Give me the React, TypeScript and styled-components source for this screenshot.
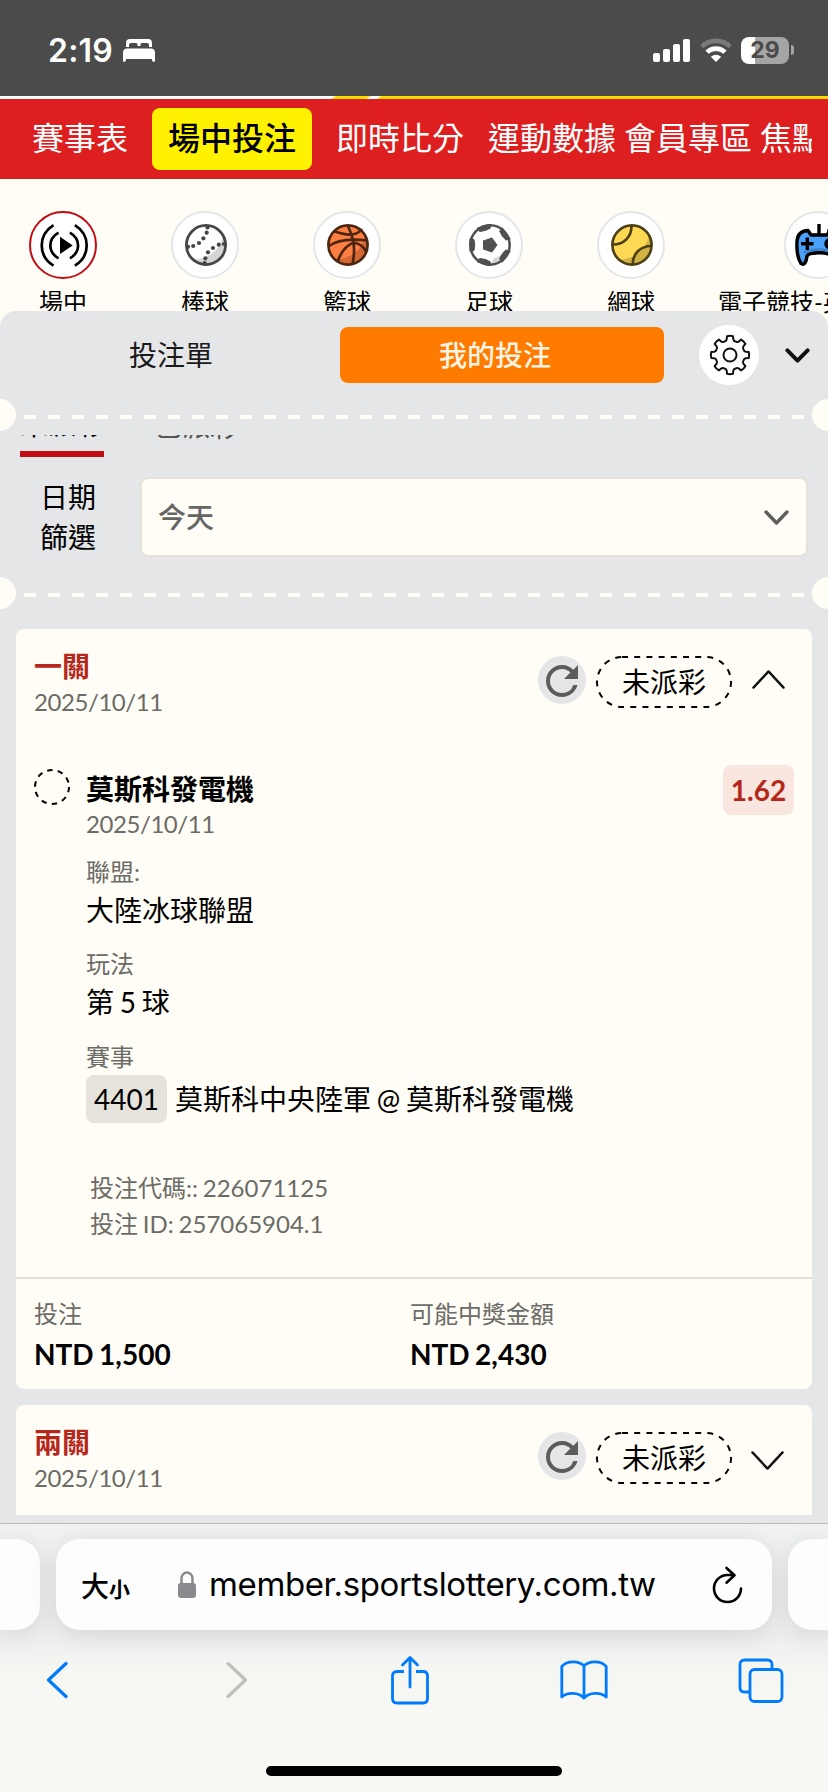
import React from 'react';
import styled, { createGlobalStyle } from 'styled-components';
import { MdRefresh } from 'react-icons/md';

const cream = '#fffdf5';
const grey = '#e4e6e8';
const sans = "Lato, 'Noto Sans CJK TC', sans-serif";

const GlobalStyle = createGlobalStyle`
  * { box-sizing: border-box; }
  body { margin: 0; background: ${cream}; overflow: hidden; }
  svg { display: block; flex: none; }
`;

const Screen = styled.div`
  display: flex;
  flex-direction: column;
  width: 828px;
  height: 1792px;
  overflow: hidden;
  background: ${cream};
  font-family: ${sans};
  color: #000;
`;

const StatusBar = styled.header`
  flex: none;
  display: flex;
  align-items: center;
  height: 96px;
  padding: 4px 34px 0 48px;
  background: #4b4b4b;
  font-family: Inter, sans-serif;
`;

const Clock = styled.span`
  width: 75px;
  font-size: 32px;
  font-weight: 600;
  letter-spacing: 0.2px;
  color: #fff;
`;

const StatusIcons = styled.div`
  display: flex;
  align-items: center;
  gap: 10px;
  margin-left: auto;
`;

const Battery = styled.div`
  display: flex;
  align-items: center;
  gap: 2px;
  margin-left: -1px;
`;

const BatteryBody = styled.div`
  display: flex;
  align-items: center;
  justify-content: center;
  width: 48px;
  height: 27px;
  border-radius: 8px;
  background: linear-gradient(90deg, #fff 14px, #a5a5a5 14px);
  color: #4b4b4b;
  font-size: 23px;
  font-weight: 700;
`;

const BatteryNub = styled.div`
  width: 3px;
  height: 10px;
  border-radius: 0 4px 4px 0;
  background: #a5a5a5;
`;

const Nav = styled.nav`
  flex: none;
  display: flex;
  align-items: center;
  height: 80px;
  padding: 0 16px 0 32px;
  background: #dd1f20;
`;

const NavTrack = styled.div`
  display: flex;
  align-items: center;
  width: 780px;
  overflow: hidden;
`;

const NavItem = styled.a<{ $active?: boolean; $gap: number }>`
  flex: none;
  height: 62px;
  margin-right: ${(p) => p.$gap}px;
  padding: 0 ${(p) => (p.$active ? 16 : 0)}px;
  border-radius: 8px;
  background: ${(p) => (p.$active ? '#fff200' : 'transparent')};
  color: ${(p) => (p.$active ? '#000' : '#fff')};
  font-size: 32px;
  font-weight: ${(p) => (p.$active ? 500 : 400)};
  line-height: 60px;
  white-space: nowrap;
`;

const Sports = styled.div`
  flex: none;
  display: flex;
  gap: 32px;
  height: 148px;
  padding: 32px 0 0 8px;
  overflow: hidden;
`;

const Sport = styled.div`
  flex: none;
  display: flex;
  flex-direction: column;
  align-items: center;
  min-width: 110px;
`;

const SportCircle = styled.div<{ $active?: boolean }>`
  display: flex;
  align-items: center;
  justify-content: center;
  width: 68px;
  height: 68px;
  padding-left: 2px;
  border: 2px solid ${(p) => (p.$active ? '#c10d12' : '#e4e6e8')};
  border-radius: 50%;
  background: #fff;
`;

const SportName = styled.span`
  margin-top: 7px;
  font-size: 24px;
  line-height: 32px;
  white-space: nowrap;
`;

const Panel = styled.main`
  position: relative;
  flex: none;
  display: flex;
  flex-direction: column;
  height: 1212px;
  margin-top: -16px;
  border-radius: 16px 16px 0 0;
  background: ${grey};
  word-spacing: -0.085em;
`;

const PanelHead = styled.div`
  display: flex;
  align-items: center;
  height: 88px;
  padding: 0 18px 0 16px;
`;

const Tab = styled.button<{ $active?: boolean }>`
  width: 324px;
  height: 56px;
  padding: 0 14px 0 0;
  border: 0;
  border-radius: 8px;
  background: ${(p) => (p.$active ? '#ff7b00' : 'transparent')};
  color: ${(p) => (p.$active ? '#fff4e3' : '#1a1a1a')};
  font: ${(p) => (p.$active ? 500 : 400)} 28px/56px ${sans};
`;

const GearButton = styled.div`
  display: flex;
  align-items: center;
  justify-content: center;
  width: 60px;
  height: 60px;
  margin: 0 26px 0 35px;
  padding-left: 2px;
  border-radius: 50%;
  background: #fff;
`;

const Tear = styled.div`
  flex: none;
  display: flex;
  align-items: center;
  justify-content: space-between;
  height: 32px;
`;

const Notch = styled.div<{ $right?: boolean }>`
  width: 16px;
  height: 32px;
  border-radius: ${(p) => (p.$right ? '16px 0 0 16px' : '0 16px 16px 0')};
  background: ${cream};
`;

const Dashes = styled.div`
  width: 780px;
  height: 4px;
  margin-top: 4px;
  background: repeating-linear-gradient(90deg, ${cream} 0 12px, transparent 12px 24px);
`;

const ScrollArea = styled.div`
  flex: none;
  height: 1080px;
  margin-top: 4px;
  overflow: hidden;
`;

const SubTabs = styled.div`
  display: flex;
  gap: 50px;
  height: 62px;
  margin-top: -40px;
  padding-left: 20px;
`;

const SubTab = styled.div<{ $active?: boolean }>`
  padding-top: ${(p) => (p.$active ? 11 : 13)}px;
  border-bottom: 6px solid ${(p) => (p.$active ? '#c10d12' : 'transparent')};
  color: ${(p) => (p.$active ? '#000' : '#555')};
  font-size: 28px;
  line-height: 36px;
`;

const Filter = styled.div`
  display: flex;
  align-items: center;
  height: 80px;
  margin: 20px 20px;
`;

const FilterLabel = styled.div`
  width: 56px;
  margin: 0 44px 0 20px;
  font-size: 28px;
  line-height: 40px;
`;

const Select = styled.div`
  flex: 1;
  display: flex;
  align-items: center;
  justify-content: space-between;
  height: 80px;
  padding: 0 17px 0 16px;
  border: 2px solid #e6e2da;
  border-radius: 8px;
  background: ${cream};
  color: #666;
  font-size: 28px;
  font-weight: 500;
  line-height: 40px;
`;

const Card = styled.section`
  margin: 20px 16px 0;
  border-radius: 8px;
  background: ${cream};
  & + & { margin-top: 16px; }
`;

const CardHead = styled.div`
  display: flex;
  align-items: flex-start;
  height: 136px;
  padding: 18px 27px 0 18px;
`;

const CardTitle = styled.div`
  height: 38px;
  color: #b5271b;
  font-size: 28px;
  font-weight: 700;
  line-height: 39px;
`;

const Muted = styled.div<{ $line?: number }>`
  color: #6b6b67;
  font-size: 24px;
  line-height: ${(p) => p.$line ?? 36}px;
`;

const BetDate = styled(Muted)`
  letter-spacing: -0.43px;
`;

const HeadActions = styled.div`
  display: flex;
  align-items: flex-start;
  margin: 9px 0 0 auto;
`;

const RefreshButton = styled.div`
  width: 48px;
  height: 48px;
  margin-right: 10px;
  padding-top: 1px;
  border-radius: 50%;
  background: ${grey};
  color: #5c5c5c;
`;

const StatusPill = styled.div`
  display: grid;
  grid-template-areas: 'pill';
  place-items: center;
  width: 136px;
  height: 52px;
  margin-right: 20px;
  font-size: 28px;
  line-height: 40px;
  & > * { grid-area: pill; }
`;

const ChevronSlot = styled.div<{ $open?: boolean }>`
  padding: ${(p) => (p.$open ? '14px 0 0 0' : '19px 1px 0 0')};
  margin-left: ${(p) => (p.$open ? 0 : -1)}px;
`;

const Leg = styled.div`
  display: flex;
  align-items: flex-start;
  height: 512px;
  padding: 0 18px;
`;

const LegMark = styled.div`
  padding-top: 4px;
`;

const LegBody = styled.div`
  flex: 1;
  margin: 5px 0 0 16px;
`;

const LegTitle = styled.div`
  font-size: 28px;
  font-weight: 700;
  line-height: 38px;
`;

const Field = styled.div<{ $top: number }>`
  margin-top: ${(p) => p.$top}px;
  font-size: 28px;
  line-height: 40px;
`;

const Match = styled.div`
  display: flex;
  align-items: center;
  gap: 8px;
`;

const MatchCode = styled.span`
  width: 81px;
  border-radius: 8px;
  background: #e6e2dc;
  line-height: 48px;
  text-align: center;
`;

const BetIds = styled.div`
  margin: 47px 0 0 4px;
`;

const Odds = styled.div`
  width: 71px;
  height: 50px;
  border-radius: 8px;
  background: #f8e6df;
  color: #b5271b;
  font-size: 28px;
  font-weight: 700;
  line-height: 51px;
  text-align: center;
`;

const Stakes = styled.div`
  display: grid;
  grid-template-columns: 376px 1fr;
  height: 112px;
  padding: 17px 18px 0;
  border-top: 2px solid #e3e0d9;
`;

const Amount = styled.div`
  font-size: 28px;
  font-weight: 700;
  line-height: 44px;
`;

const Safari = styled.footer`
  flex: none;
  display: flex;
  flex-direction: column;
  height: 269px;
  border-top: 1px solid #b7babc;
  background: linear-gradient(#f1f2f2 0, #eeeeed 110px, #f6f6f3 150px, #f8f8f4 200px);
`;

const TabStrip = styled.div`
  display: flex;
  gap: 16px;
  margin-top: 15px;
`;

const PeekTab = styled.div<{ $right?: boolean }>`
  flex: none;
  width: 40px;
  height: 91px;
  border-radius: ${(p) => (p.$right ? '24px 0 0 24px' : '0 24px 24px 0')};
  background: #fdfdfd;
  box-shadow: 0 4px 26px rgba(0, 0, 0, 0.11);
`;

const AddressBar = styled.div`
  flex: none;
  display: flex;
  align-items: center;
  width: 716px;
  height: 91px;
  padding: 0 29px 0 25px;
  border-radius: 24px;
  background: #fdfdfd;
  box-shadow: 0 4px 26px rgba(0, 0, 0, 0.11);
`;

const TextSize = styled.div`
  width: 97px;
  font-size: 28px;
  font-weight: 500;
  small {
    font-size: 21px;
    font-weight: 700;
  }
`;

const Url = styled.div`
  flex: 1;
  margin-left: 13px;
  padding-bottom: 2px;
  font: 400 33px/44px Inter, sans-serif;
  letter-spacing: -0.38px;
  white-space: nowrap;
`;

const Toolbar = styled.div`
  display: grid;
  grid-template-columns: 180px 164px 170px 178px 46px;
  align-items: center;
  height: 50px;
  margin-top: 25px;
  padding-left: 46px;
`;

const HomeIndicator = styled.div`
  width: 296px;
  height: 10px;
  margin: 61px auto 0;
  border-radius: 5px;
  background: #000;
`;

const BedIcon = () => (
  <svg width="32" height="23" viewBox="0 0 32 23" fill="#fff">
    <path d="M3 8V4Q3 0 7 0H25Q29 0 29 4V8H26V6Q26 4 24 4H19Q17.5 4 17.5 5.5V7H14.5V5.500Q14.500 4 13 4H8Q6 4 6 6V8Z" />
    <path d="M0 14Q0 9.500 4 9.500H28Q32 9.500 32 14V22Q32 22.800 31 22.800H30Q29 22.800 29 20H3Q3 22.800 2 22.800H1Q0 22.800 0 22Z" />
  </svg>
);

const SignalIcon = () => (
  <svg width="37" height="23" viewBox="0 0 37 23" fill="#fff">
    <rect y="14" width="7" height="9" rx="2" />
    <rect x="10" y="10" width="7" height="13" rx="2" />
    <rect x="20" y="5" width="7" height="18" rx="2" />
    <rect x="30" width="7" height="23" rx="2" />
  </svg>
);

const WifiIcon = () => (
  <svg width="32" height="24" viewBox="0 0 32 24" fill="none" strokeWidth="4.6">
    <path d="M1.800 8.600A20.500 20.500 0 0 1 30.200 8.600" stroke="#7a7a7a" />
    <path d="M7 14.200A13 13 0 0 1 25 14.200" stroke="#fff" />
    <path d="M16 24L10.800 18.700Q16 14.800 21.200 18.700Z" fill="#fff" />
  </svg>
);

const LiveIcon = () => (
  <svg width="50" height="43" viewBox="0 0 50 43" fill="none" stroke="#000" strokeWidth="2.700">
    <path d="M14.500 1.200C-1.200 11-1.200 32 14.500 41.600M19.500 8.600C8.600 15 8.600 28 19.500 34.300M35.900 1.200C51.600 11 51.600 32 35.900 41.600M30.900 8.600C41.800 15 41.800 28 30.900 34.300" />
    <path d="M21 12.700L33.700 21.400L21 30Z" fill="#000" stroke="none" />
  </svg>
);

const BallShade = ({ color }: { color: string }) => (
  <path d="M38 9Q36 32 9 36Q14 41 21 41A20 20 0 0 0 41 21Q41 14 38 9Z" fill={color} />
);

const BaseballIcon = () => (
  <svg width="42" height="42" viewBox="0 0 42 42">
    <circle cx="21" cy="21" r="20" fill="#fff" />
    <BallShade color="#d6d6d6" />
    <circle cx="21" cy="21" r="19.600" fill="none" stroke="#464646" strokeWidth="2.800" />
    <g fill="#464646">
      {[[22.5, 3.5], [21.7, 8.7], [18.400, 14.300], [14, 19], [8.200, 22], [3, 22.800], [33.800, 20.700], [28, 24], [23, 28.300], [20.400, 34.300], [39, 20], [19.600, 39]].map(([x, y]) => (
        <circle key={`${x}-${y}`} cx={x} cy={y} r="2.100" />
      ))}
    </g>
  </svg>
);

const BasketballIcon = () => (
  <svg width="42" height="42" viewBox="0 0 42 42" fill="none" stroke="#4c2610" strokeWidth="2.700">
    <circle cx="21" cy="21" r="20" fill="#ff7f42" stroke="none" />
    <g stroke="none"><BallShade color="#d26835" /></g>
    <circle cx="21" cy="21" r="19.600" />
    <path d="M21 2Q25 10 26.500 19Q28 29 25.500 40M6.500 7Q28 15 35 5M1.500 22.500Q13 13 41 16.500M10.500 38C14 27 22 18.500 28 19Q35 20 39.500 28" />
  </svg>
);

const SoccerIcon = () => (
  <svg width="42" height="42" viewBox="0 0 42 42" fill="#505050">
    <circle cx="21" cy="21" r="20" fill="#fff" />
    <path d="M37 29L24 35L23 39Q33 38 37 29Z" fill="#d6d6d6" />
    <circle cx="21" cy="21" r="19.700" fill="none" stroke="#505050" strokeWidth="2.600" />
    {[0, 72, 144, 216, 288].map((a) => (
      <path key={a} d="M1 14.500L5 15.500Q6.500 21 5 26.500L1 27.500Z" stroke="#505050" strokeWidth="1" transform={`rotate(${a} 21 21)`} />
    ))}
    <path d="M14 16.500L23 13.500L28.500 21L23 28.500L14 25.500Z" />
  </svg>
);

const TennisIcon = () => (
  <svg width="42" height="42" viewBox="0 0 42 42" fill="none" stroke="#4c4019" strokeWidth="2.700">
    <circle cx="21" cy="21" r="20" fill="#ffd954" stroke="none" />
    <g stroke="none"><BallShade color="#d2b245" /></g>
    <circle cx="21" cy="21" r="19.600" />
    <path d="M2 20.500C13 20.500 20.500 13 20.500 2M40.500 22C29 22 21.800 30 21.800 40" />
  </svg>
);

const GamepadIcon = () => (
  <svg width="48" height="43" viewBox="0 0 48 43" fill="none" stroke="#000" strokeWidth="3.400" strokeLinejoin="round">
    <path d="M13 6.500L16 11H32L35 6.500C42 7 45.500 10 46 17C46.500 25 45.500 34 42 39.500C39 42 36.500 38 36 32C34 29 28 28.800 24 28.800S14 29 12 32C11.500 38 9 42 6 39.500C2.500 34 1.500 25 2 17C2.500 10 6 7 13 6.500Z" fill="#4ba0fa" />
    <path d="M9 29C13 25.500 19 25.500 24 25.500S35 25.500 39 29" stroke="#3b82cc" strokeWidth="2.600" />
    <path d="M24 0V10M12.300 13.500V26M6 19.700H18.500M34 5V8" />
    <circle cx="35" cy="19.700" r="4" />
  </svg>
);

const polar = (r: number, deg: number) => {
  const a = (deg * Math.PI) / 180;
  return `${(21 + r * Math.sin(a)).toFixed(2)} ${(21 - r * Math.cos(a)).toFixed(2)}`;
};

/* eight rounded teeth around the hub */
const gearPath =
  Array.from({ length: 8 }, (_, i) => {
    const c = i * 45;
    return `${i ? 'L' : 'M'}${polar(19, c - 9)}Q${polar(19.5, c)} ${polar(19, c + 9)}L${polar(16, c + 12)}Q${polar(14.2, c + 16)} ${polar(14.6, c + 22.5)}Q${polar(14.2, c + 29)} ${polar(16, c + 33)}`;
  }).join('') + 'Z';

const GearIcon = () => (
  <svg width="42" height="42" viewBox="0 0 42 42" fill="none" stroke="#111" strokeWidth="2" strokeLinejoin="round">
    <path d={gearPath} />
    <circle cx="21" cy="21" r="6.500" />
  </svg>
);

const Chevron = ({ w, h, stroke, color = '#111', up }: { w: number; h: number; stroke: number; color?: string; up?: boolean }) => {
  const i = stroke * 0.6;
  const [a, b] = up ? [h - i, i] : [i, h - i];
  return (
    <svg width={w} height={h} fill="none" stroke={color} strokeWidth={stroke}>
      <path d={`M${i} ${a}L${w / 2} ${b}L${w - i} ${a}`} strokeLinecap="round" strokeLinejoin="round" />
    </svg>
  );
};

const LockIcon = () => (
  <svg width="18" height="27" viewBox="0 0 18 27">
    <path d="M3.500 13V7.500A5.500 6 0 0 1 14.500 7.500V13" fill="none" stroke="#8a8a8e" strokeWidth="2.500" />
    <rect y="12" width="18" height="15" rx="3" fill="#8a8a8e" />
  </svg>
);

const ReloadIcon = () => (
  <svg width="31" height="38" viewBox="0 0 31 38" fill="none" stroke="#000" strokeWidth="2.600" strokeLinecap="round" strokeLinejoin="round">
    <path d="M29 22.500A13.500 13.500 0 1 1 15.500 9H22M14.500 2L22.500 9.300L14.500 16.700" />
  </svg>
);

const BackIcon = ({ forward }: { forward?: boolean }) => (
  <svg width="22" height="38" viewBox="0 0 22 38" fill="none" stroke={forward ? '#bfbfbf' : '#007aff'} strokeWidth="3.200" strokeLinecap="round" strokeLinejoin="round">
    <path d={forward ? 'M2 2.500L19.500 19L2 35.500' : 'M20 2.500L2.500 19L20 35.500'} />
  </svg>
);

const blue = { fill: 'none', stroke: '#007aff', strokeWidth: 2.8, strokeLinecap: 'round', strokeLinejoin: 'round' } as const;

const ShareIcon = () => (
  <svg width="40" height="50" viewBox="0 0 40 50" {...blue}>
    <path d="M14 16.500H7Q2.500 16.500 2.500 21V43.500Q2.500 48 7 48H33Q37.500 48 37.500 43.500V21Q37.500 16.500 33 16.500H26" strokeLinecap="butt" />
    <path d="M20 32V3M12.500 10L20 2.500L27.500 10" />
  </svg>
);

const BookIcon = () => (
  <svg width="48" height="40" viewBox="0 0 48 40" {...blue}>
    <path d="M24 6C19 .5 7 .5 1.800 6.500V37C7 32 19 32 24 38C29 32 41 32 46.200 37V6.500C41 .5 29 .5 24 6ZM24 6V37" />
  </svg>
);

const TabsIcon = () => (
  <svg width="46" height="45" viewBox="0 0 46 45" {...blue}>
    <path d="M34 10V6.500Q34 2 29.500 2H6.500Q2 2 2 6.500V29.500Q2 34 6.500 34H11" strokeLinecap="butt" />
    <rect x="12" y="11.500" width="32" height="32" rx="4.500" />
  </svg>
);

const sports = [
  { name: '場中', icon: <LiveIcon />, active: true },
  { name: '棒球', icon: <BaseballIcon /> },
  { name: '籃球', icon: <BasketballIcon /> },
  { name: '足球', icon: <SoccerIcon /> },
  { name: '網球', icon: <TennisIcon /> },
  { name: '電子競技-英雄聯盟', icon: <GamepadIcon /> },
];

const navItems = [
  { name: '賽事表', gap: 24 },
  { name: '場中投注', gap: 24, active: true },
  { name: '即時比分', gap: 24 },
  { name: '運動數據', gap: 8 },
  { name: '會員專區', gap: 8 },
  { name: '焦點', gap: 0 },
];

const TearLine = () => (
  <Tear>
    <Notch />
    <Dashes />
    <Notch $right />
  </Tear>
);

const BetHead = ({ title, open }: { title: string; open?: boolean }) => (
  <CardHead>
    <div>
      <CardTitle>{title}</CardTitle>
      <BetDate $line={34}>2025/10/11</BetDate>
    </div>
    <HeadActions>
      <RefreshButton><MdRefresh size={48} /></RefreshButton>
      <StatusPill>
        <svg width="136" height="52" fill="none" stroke="#000" strokeWidth="2">
          <rect x="1" y="1" width="134" height="50" rx="25" strokeDasharray="6 6.200" />
        </svg>
        <span>未派彩</span>
      </StatusPill>
      <ChevronSlot $open={open}>
        <Chevron w={33} h={19} stroke={2.4} up={open} />
      </ChevronSlot>
    </HeadActions>
  </CardHead>
);

const BannerEdge = () => (
  <svg width="828" height="3">
    <rect width="828" height="3" fill="#fff" />
    <path d="M331 3L336 0H371L366 3ZM377 3L381 0H828V3Z" fill="#ffdc00" />
  </svg>
);

export default function App() {
  return (
    <Screen>
      <GlobalStyle />
      <StatusBar>
        <Clock>2:19</Clock>
        <BedIcon />
        <StatusIcons>
          <SignalIcon />
          <WifiIcon />
          <Battery>
            <BatteryBody>29</BatteryBody>
            <BatteryNub />
          </Battery>
        </StatusIcons>
      </StatusBar>
      <BannerEdge />
      <Nav>
        <NavTrack>
          {navItems.map((n) => (
            <NavItem key={n.name} $active={n.active} $gap={n.gap}>{n.name}</NavItem>
          ))}
        </NavTrack>
      </Nav>
      <Sports>
        {sports.map((s) => (
          <Sport key={s.name}>
            <SportCircle $active={s.active}>{s.icon}</SportCircle>
            <SportName>{s.name}</SportName>
          </Sport>
        ))}
      </Sports>
      <Panel>
        <PanelHead>
          <Tab>投注單</Tab>
          <Tab $active>我的投注</Tab>
          <GearButton><GearIcon /></GearButton>
          <Chevron w={25} h={15} stroke={4} />
        </PanelHead>
        <TearLine />
        <ScrollArea>
          <SubTabs>
            <SubTab $active>未派彩</SubTab>
            <SubTab>已派彩</SubTab>
          </SubTabs>
          <Filter>
            <FilterLabel>日期篩選</FilterLabel>
            <Select>
              今天
              <Chevron w={25} h={15} stroke={3.4} color="#5e5e5e" />
            </Select>
          </Filter>
          <TearLine />
          <Card>
            <BetHead title="一關" open />
            <Leg>
              <LegMark>
                <svg width="36" height="36" fill="none" stroke="#000" strokeWidth="2">
                  <circle cx="18" cy="18" r="17" strokeDasharray="5.400 5.280" />
                </svg>
              </LegMark>
              <LegBody>
                <LegTitle>莫斯科發電機</LegTitle>
                <BetDate $line={32}>2025/10/11</BetDate>
                <Field $top={14}>
                  <Muted>聯盟:</Muted>
                  大陸冰球聯盟
                </Field>
                <Field $top={16}>
                  <Muted>玩法</Muted>
                  第 5 球
                </Field>
                <Field $top={16}>
                  <Muted $line={37}>賽事</Muted>
                  <Match>
                    <MatchCode>4401</MatchCode>
                    <span>莫斯科中央陸軍 @ 莫斯科發電機</span>
                  </Match>
                </Field>
                <BetIds>
                  <Muted>投注代碼:: 226071125</Muted>
                  <Muted>投注 ID: 257065904.1</Muted>
                </BetIds>
              </LegBody>
              <Odds>1.62</Odds>
            </Leg>
            <Stakes>
              <div>
                <Muted>投注</Muted>
                <Amount>NTD 1,500</Amount>
              </div>
              <div>
                <Muted>可能中獎金額</Muted>
                <Amount>NTD 2,430</Amount>
              </div>
            </Stakes>
          </Card>
          <Card>
            <BetHead title="兩關" />
          </Card>
        </ScrollArea>
      </Panel>
      <Safari>
        <TabStrip>
          <PeekTab />
          <AddressBar>
            <TextSize>大<small>小</small></TextSize>
            <LockIcon />
            <Url>member.sportslottery.com.tw</Url>
            <ReloadIcon />
          </AddressBar>
          <PeekTab $right />
        </TabStrip>
        <Toolbar>
          <BackIcon />
          <BackIcon forward />
          <ShareIcon />
          <BookIcon />
          <TabsIcon />
        </Toolbar>
        <HomeIndicator />
      </Safari>
    </Screen>
  );
}
